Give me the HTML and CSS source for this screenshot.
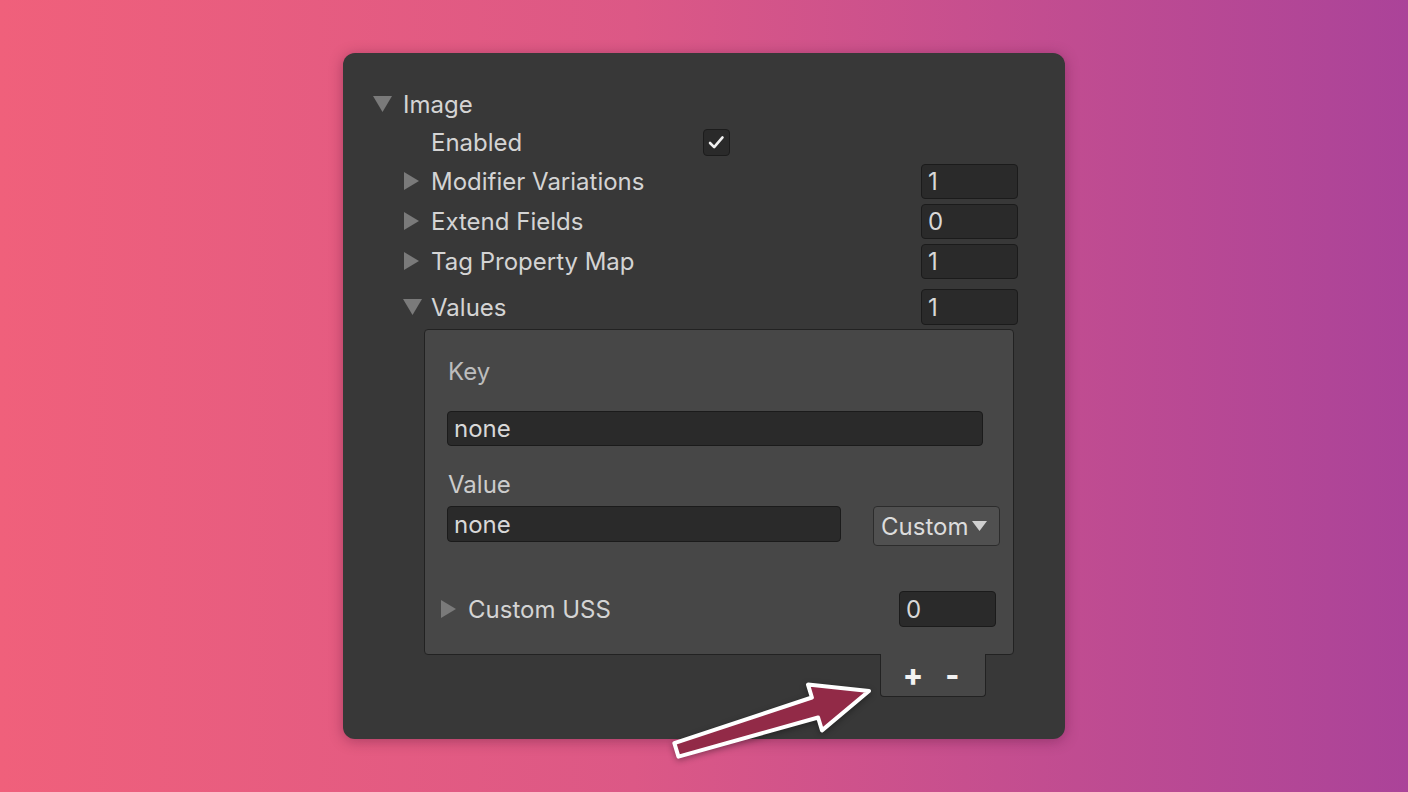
FILE: index.html
```html
<!DOCTYPE html>
<html lang="en">
<head>
    <meta charset="UTF-8">
    <meta name="viewport" content="width=device-width, initial-scale=1.0">
    <title>Inspector - Image</title>
    <link rel="stylesheet" href="styles.css">
</head>
<body>
    <div class="stage">
        <div class="panel">
            <div class="row row-top">
                <svg class="caret caret-down" viewBox="0 0 19 16"><polygon points="0,0 19,0 9.5,16"/></svg>
                <span class="label">Image</span>
            </div>
            <div class="row row-sub row-enabled">
                <span class="caret-space"></span>
                <span class="label label-fixed">Enabled</span>
                <span class="checkbox">
                    <svg viewBox="0 0 27 27"><polyline points="6.5,14 11,18.5 20,8"/></svg>
                </span>
            </div>
            <div class="row row-sub">
                <svg class="caret caret-right" viewBox="0 0 15 18"><polygon points="0,0 15,9 0,18"/></svg>
                <span class="label">Modifier Variations</span>
                <span class="field field-num">1</span>
            </div>
            <div class="row row-sub">
                <svg class="caret caret-right" viewBox="0 0 15 18"><polygon points="0,0 15,9 0,18"/></svg>
                <span class="label">Extend Fields</span>
                <span class="field field-num">0</span>
            </div>
            <div class="row row-sub">
                <svg class="caret caret-right" viewBox="0 0 15 18"><polygon points="0,0 15,9 0,18"/></svg>
                <span class="label">Tag Property Map</span>
                <span class="field field-num">1</span>
            </div>
            <div class="row row-sub row-values">
                <svg class="caret caret-down" viewBox="0 0 19 16"><polygon points="0,0 19,0 9.5,16"/></svg>
                <span class="label">Values</span>
                <span class="field field-num field-tall">1</span>
            </div>

            <div class="list">
                <div class="list-box">
                    <div class="field-label field-label-key">Key</div>
                    <div class="field field-key">none</div>
                    <div class="field-label field-label-value">Value</div>
                    <div class="value-row">
                        <div class="field field-value">none</div>
                        <div class="dropdown">
                            <span>Custom</span>
                            <svg viewBox="0 0 15 10"><polygon points="0,0 15,0 7.5,10"/></svg>
                        </div>
                    </div>
                    <div class="row row-uss">
                        <svg class="caret caret-right" viewBox="0 0 15 18"><polygon points="0,0 15,9 0,18"/></svg>
                        <span class="label">Custom USS</span>
                        <span class="field field-num field-uss">0</span>
                    </div>
                </div>
                <div class="list-footer">
                    <span class="footer-btn">+</span>
                    <span class="footer-btn">-</span>
                </div>
            </div>

            <svg class="arrow" viewBox="0 0 224 96" width="224" height="96">
                <polygon points="14.35,71.2 151.9,25.5 148,12.6 209,19 162,58.4 158.1,45.5 18.45,84.6"/>
            </svg>
        </div>
    </div>
</body>
</html>
```

FILE: styles.css
```css
* {
    box-sizing: border-box;
}

html, body {
    margin: 0;
    height: 100%;
}

body {
    background: linear-gradient(90deg, #f0607b 0%, #dc5886 45%, #ab4399 100%);
    font-family: Inter, "Noto Sans", sans-serif;
    color: #d4d4d4;
    font-size: 24px;
}

.stage {
    height: 100%;
    display: flex;
    align-items: center;
    justify-content: center;
}

.panel {
    position: relative;
    width: 722px;
    height: 686px;
    background-color: #383838;
    border-radius: 12px;
    padding: 32px 47px 0 30px;
    box-shadow: 0 2px 14px rgba(60, 10, 40, 0.35);
}

.row {
    display: flex;
    align-items: center;
    height: 40px;
}

.row-top {
    height: 38px;
}

.row-enabled {
    height: 38px;
}

.row-sub {
    margin-left: 31px;
}

.row-values {
    margin-top: 6px;
}

.label {
    white-space: nowrap;
}

.label-fixed {
    width: 272px;
}

.caret {
    fill: #7a7a7a;
    flex: none;
}

.caret-down {
    width: 19px;
    height: 16px;
    margin-right: 11px;
}

.row-values .caret-down {
    margin-left: -1px;
    margin-right: 9px;
}

.caret-right {
    width: 15px;
    height: 18px;
    margin-right: 12px;
}

.caret-space {
    width: 27px;
    flex: none;
}

.checkbox {
    width: 27px;
    height: 27px;
    background-color: #2a2a2a;
    border: 1px solid #1c1c1c;
    border-radius: 4px;
    display: flex;
}

.checkbox svg {
    width: 100%;
    height: 100%;
    fill: none;
    stroke: #f0f0f0;
    stroke-width: 2.8;
    stroke-linecap: round;
    stroke-linejoin: round;
}

.field {
    background-color: #2a2a2a;
    border: 1px solid #1b1b1b;
    border-radius: 4px;
    color: #d8d8d8;
    padding-left: 6px;
    display: flex;
    align-items: center;
    flex: none;
}

.field-num {
    margin-left: auto;
    width: 97px;
    height: 35px;
}

.field-tall {
    height: 36px;
}

.list {
    display: flex;
    flex-direction: column;
    margin-top: 2px;
    margin-left: 51px;
    width: 590px;
}

.list-box {
    background-color: #474747;
    border: 1px solid #222222;
    border-radius: 4px;
    padding: 0 17px 27px 22px;
}

.field-label {
    height: 28px;
    line-height: 28px;
    padding-left: 1px;
}

.field-label-key {
    margin-top: 28px;
    color: #bdbdbd;
}

.field-label-value {
    margin-top: 25px;
    color: #cccccc;
}

.field-key {
    margin-top: 25px;
    width: 536px;
    height: 35px;
}

.value-row {
    display: flex;
    align-items: flex-start;
    margin-top: 7px;
}

.field-value {
    width: 394px;
    height: 36px;
}

.dropdown {
    flex: none;
    margin-left: 32px;
    width: 127px;
    height: 40px;
    background-color: #505050;
    border: 1px solid #2c2c2c;
    border-radius: 4px;
    display: flex;
    align-items: center;
    padding-left: 7px;
    color: #dcdcdc;
}

.dropdown svg {
    width: 15px;
    height: 10px;
    margin-left: 4px;
    fill: #d0d0d0;
}

.row-uss {
    margin-top: 45px;
    margin-left: -6px;
    height: 36px;
}

.field-uss {
    height: 36px;
}

.list-footer {
    align-self: flex-end;
    margin-right: 28px;
    margin-top: -1px;
    width: 106px;
    height: 43px;
    background-color: #474747;
    border: 1px solid #222222;
    border-top: none;
    border-radius: 0 0 4px 4px;
    display: flex;
    align-items: center;
    justify-content: center;
    gap: 22px;
    padding-right: 4px;
}

.footer-btn {
    color: #f2f2f2;
    font-weight: 800;
    font-size: 30px;
    line-height: 1;
}

.arrow {
    position: absolute;
    left: 317px;
    top: 619px;
    overflow: visible;
    filter: drop-shadow(0 2px 3px rgba(0, 0, 0, 0.35));
}

.arrow polygon {
    fill: #922a47;
    stroke: #ffffff;
    stroke-width: 4;
    stroke-linejoin: round;
}
```
